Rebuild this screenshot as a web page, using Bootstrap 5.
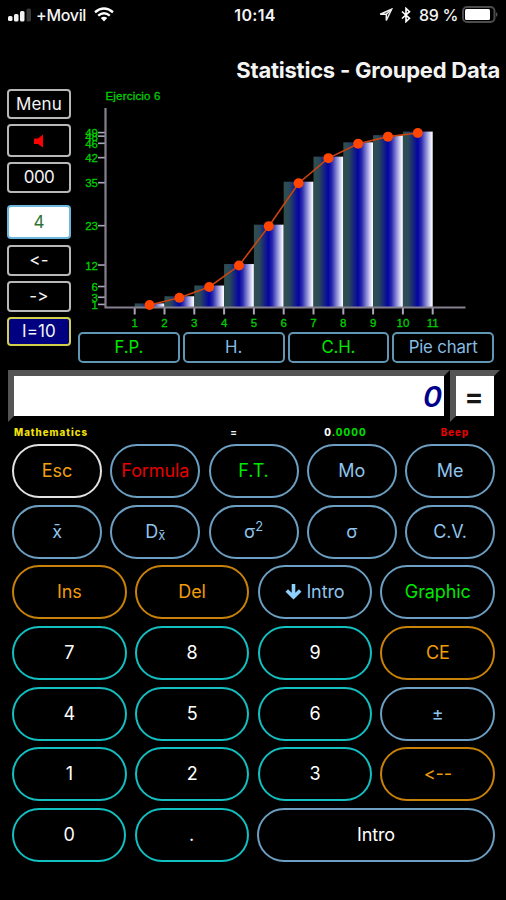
<!DOCTYPE html>
<html lang="en">
<head>
<meta charset="utf-8">
<meta name="viewport" content="width=device-width, initial-scale=1">
<title>Statistics - Grouped Data</title>
<link href="https://cdn.jsdelivr.net/npm/bootstrap@5.3.0/dist/css/bootstrap.min.css" rel="stylesheet">
<style>
body{background:#000;color:#f4f4f4;font-family:Inter,"Liberation Sans",sans-serif;height:900px;overflow:hidden}
.btn{--bs-btn-padding-x:0;--bs-btn-padding-y:0;--bs-btn-line-height:1;display:flex;align-items:center;justify-content:center;white-space:nowrap;border-width:2px;font-feature-settings:"calt" 0,"liga" 0}
.status-row{height:29px;padding:0 7px 0 8px;font-size:16px;line-height:1}
.carrier,.charge{letter-spacing:-.3px;font-weight:500}
.clock{font-weight:600;letter-spacing:.3px;padding-left:3px}
.title-row{height:60px;padding:0 6px 0 0}
.title-row h1{font-size:22px;font-weight:700;line-height:1;padding-top:30px;letter-spacing:-.23px}
.upper{height:281px;padding-left:7px}
.side{width:64px}
.side .btn{border-color:#b8b8b8;color:#f4f4f4;font-size:17px;border-radius:4px;height:31px;letter-spacing:.1px}
.side .b-menu{height:30px;margin-bottom:5px}
.side .b-snd{height:33px;margin-bottom:5px}
.side .b-num{margin-bottom:12px;letter-spacing:-.5px}
.side .b-four{height:34px;margin-bottom:6px;background:#fff;color:#2f7435;border-color:#6bb7de}
.side .b-prev{margin-bottom:5px}
.side .b-next{margin-bottom:5px}
.side .b-int{height:29px;background:#000080;border-color:#d2d04a}
.plot{width:423px}
.plot svg{display:block;height:243px}
.plot text{font-family:"Liberation Sans",Arial,sans-serif;fill:#00d000;font-size:11.5px;stroke:#00d000;stroke-width:.3px}
.modes{padding-left:7px;gap:3px}
.modes .btn{height:31px;width:102px;border-color:#6096b4;border-radius:5px;font-size:16.8px;letter-spacing:-.15px;color:#86bce2}
.modes .btn.go,.keys .btn.go{color:#00e800}
.screen{height:52px;padding-left:8px}
.lcd{border:6px solid #000;border-top-color:#555;border-left-color:#555;background:#fff;line-height:1}
.lcd-main{width:442px;color:#00008b;font-size:29px;font-weight:600;font-style:italic;padding-right:2px}
.lcd-eq{width:50px;color:#151515;font-size:29px;font-weight:600;padding-right:2px}
.legend-row{height:22px;font-size:9.7px;font-weight:800;line-height:22px;letter-spacing:1px}
.legend-row span{white-space:nowrap}
.l1{width:216px;padding-left:14px;color:#f2e20a}
.l2{width:36px;text-align:center}
.l3{width:187px;text-align:center;color:#00d800}
.l3 b{color:#fff;font-weight:800}
.l4{width:32px;text-align:center;color:#e80000}
.keys{padding:0 11px 0 12px;gap:6.7px}
.krow{gap:8.3px}
.keys .btn{height:54px;flex:1 1 0;min-width:0;font-size:18px;letter-spacing:-.12px;border-color:#6c9fc2;color:#8fc4ec}
.keys .btn.or{border-color:#c98209;color:#f09c0a}
.keys .btn.cy{border-color:#13bfc1;color:#fff}
.keys .btn.wh{border-color:#e2e2e2;color:#f0a010}
.keys .btn.rd{color:#e60000}
.keys .btn.wide{flex:0 0 238px;color:#fff}
.keys sup{font-size:13px;top:-.55em}
.keys sub{font-size:13px;bottom:-.2em}
</style>
<script src="https://cdn.jsdelivr.net/npm/bootstrap@5.3.0/dist/js/bootstrap.bundle.min.js"></script>
</head>
<body>
<header>
 <div class="status-row row g-0 align-items-center">
  <div class="col d-flex align-items-center">
   <svg width="24" height="14" viewBox="0 0 24 14"><g fill="#f4f4f4"><rect y="8" width="4.5" height="5" rx="1.5"/><rect x="6" y="6" width="4.5" height="7.500" rx="1.500"/><rect x="12" y="3" width="4.500" height="10.500" rx="1.500"/></g><rect x="18.500" y=".5" width="4.500" height="13" rx="1.500" fill="#383838"/></svg>
   <span class="carrier ms-1">+Movil</span>
   <svg class="ms-2" width="20" height="15" viewBox="0 0 20 15" fill="none" stroke="#fff" stroke-width="2.400"><path d="M1 5.200Q10-2.200 19 5.200M4.200 8.600Q10 4 15.800 8.600"/><path d="M6.800 11.100Q10 8.500 13.200 11.100L10 14.500z" fill="#fff" stroke="none"/></svg>
  </div>
  <div class="col-auto clock">10:14</div>
  <div class="col d-flex align-items-center justify-content-end">
   <svg width="14" height="14" viewBox="0 0 14 14" fill="none" stroke="#eee" stroke-width="1.500"><path d="M12.600 1.200L1.200 6.200H7.300V12.500z"/><path d="M12.600 1.200L7.300 6.200"/></svg>
   <svg class="ms-2" width="10" height="16" viewBox="0 0 10 16" fill="none" stroke="#fff" stroke-width="1.600"><path d="M1 4.500L8.500 11.300 5 14.600V1.400L8.500 4.700 1 11.500"/></svg>
   <span class="charge ms-2">89 %</span>
   <svg class="ms-1" width="37" height="17" viewBox="0 0 37 17"><rect x="1" y="1" width="31.500" height="15" rx="4" fill="none" stroke="#4c4c4c" stroke-width="2"/><rect x="3" y="3" width="25" height="11" rx="1.500" fill="#fff"/><path d="M34 6q3 2.500 0 5z" fill="#555"/></svg>
  </div>
 </div>
 <div class="title-row d-flex justify-content-end"><h1 class="m-0">Statistics - Grouped Data</h1></div>
</header>
<main>
 <section class="upper d-flex">
  <div class="side d-flex flex-column">
   <button class="btn b-menu">Menu</button>
   <button class="btn b-snd"><svg width="12" height="14" viewBox="0 0 12 14"><path d="M1 4.500h4L10 .5v13L5 10H1z" fill="#f00"/></svg></button>
   <button class="btn b-num">000</button>
   <button class="btn b-four">4</button>
   <button class="btn b-prev">&lt;-</button>
   <button class="btn b-next">-&gt;</button>
   <button class="btn b-int">I=10</button>
  </div>
  <div class="plot">
   <svg id="chart" width="423" height="243" viewBox="71 89 423 243">
    <defs><linearGradient id="barfill"><stop offset="0" stop-color="#2f4f4f"/><stop offset=".18" stop-color="#2b4a58"/><stop offset=".5" stop-color="#0404a0"/><stop offset=".62" stop-color="#2a2aae"/><stop offset=".95" stop-color="#efefff"/><stop offset="1" stop-color="#fff"/></linearGradient></defs>
    <text x="105.500" y="100" textLength="55">Ejercicio 6</text>
   </svg>
   <div class="modes d-flex">
    <button class="btn go">F.P.</button><button class="btn">H.</button><button class="btn go">C.H.</button><button class="btn">Pie chart</button>
   </div>
  </div>
 </section>
 <section class="screen d-flex">
  <div class="lcd lcd-main d-flex align-items-center justify-content-end">0</div>
  <div class="lcd lcd-eq d-flex align-items-center justify-content-center">=</div>
 </section>
 <div class="legend-row d-flex"><span class="l1">Mathematics</span><span class="l2">=</span><span class="l3"><b>0</b>.0000</span><span class="l4">Beep</span></div>
 <section class="keys d-flex flex-column">
  <div class="krow d-flex"><button class="btn rounded-pill wh">Esc</button><button class="btn rounded-pill rd">Formula</button><button class="btn rounded-pill go">F.T.</button><button class="btn rounded-pill">Mo</button><button class="btn rounded-pill">Me</button></div>
  <div class="krow d-flex"><button class="btn rounded-pill">x̄</button><button class="btn rounded-pill"><span>D<sub>x̄</sub></span></button><button class="btn rounded-pill"><span>σ<sup>2</sup></span></button><button class="btn rounded-pill">σ</button><button class="btn rounded-pill">C.V.</button></div>
  <div class="krow d-flex"><button class="btn rounded-pill or">Ins</button><button class="btn rounded-pill or">Del</button><button class="btn rounded-pill"><svg class="me-1" width="17" height="16" viewBox="0 0 17 16" fill="none" stroke="#8fd0ff" stroke-width="3.600"><path d="M8.500 0V12M1.800 6.500L8.500 13l6.700-6.500"/></svg>Intro</button><button class="btn rounded-pill go">Graphic</button></div>
  <div class="krow d-flex"><button class="btn rounded-pill cy">7</button><button class="btn rounded-pill cy">8</button><button class="btn rounded-pill cy">9</button><button class="btn rounded-pill or">CE</button></div>
  <div class="krow d-flex"><button class="btn rounded-pill cy">4</button><button class="btn rounded-pill cy">5</button><button class="btn rounded-pill cy">6</button><button class="btn rounded-pill">±</button></div>
  <div class="krow d-flex"><button class="btn rounded-pill cy">1</button><button class="btn rounded-pill cy">2</button><button class="btn rounded-pill cy">3</button><button class="btn rounded-pill or">&lt;--</button></div>
  <div class="krow d-flex"><button class="btn rounded-pill cy">0</button><button class="btn rounded-pill cy">.</button><button class="btn rounded-pill wide">Intro</button></div>
 </section>
</main>
<script>
// cumulative histogram with its frequency polygon
const values=[1,3,6,12,23,35,42,46,48,49],x0=134.7,step=29.8,base=307;
const y=v=>base-v*3.58;
let s='',line='',dots='';
values.forEach((v,i)=>{
 const x=x0+i*step;
 s+=`<rect x="${x}" y="${y(v)}" width="${step}" height="${base-y(v)}" fill="url(#barfill)"/>`;
 s+=`<path d="M98 ${y(v)+1}h7" stroke="#aaa5b8" stroke-width="1.6"/><text x="98" y="${y(v)+5.5}" text-anchor="end">${v}</text>`;
 line+=`${x+step/2},${y(v)+1.5} `;
 dots+=`<circle cx="${x+step/2}" cy="${y(v)+1.5}" r="5" fill="#ff4500"/>`;
});
for(let i=0;i<=10;i++){const x=x0+i*step;s+=`<path d="M${x} 307v7.500" stroke="#aaa5b8" stroke-width="2"/><text x="${x}" y="327" text-anchor="middle">${i+1}</text>`;}
s+='<path d="M105.500 108V307.500H465.500" fill="none" stroke="#85808f" stroke-width="2.200"/>';
s+=`<polyline points="${line}" fill="none" stroke="#c84410" stroke-width="1.6"/>`+dots;
document.getElementById('chart').insertAdjacentHTML('beforeend',s);
</script>
</body>
</html>
